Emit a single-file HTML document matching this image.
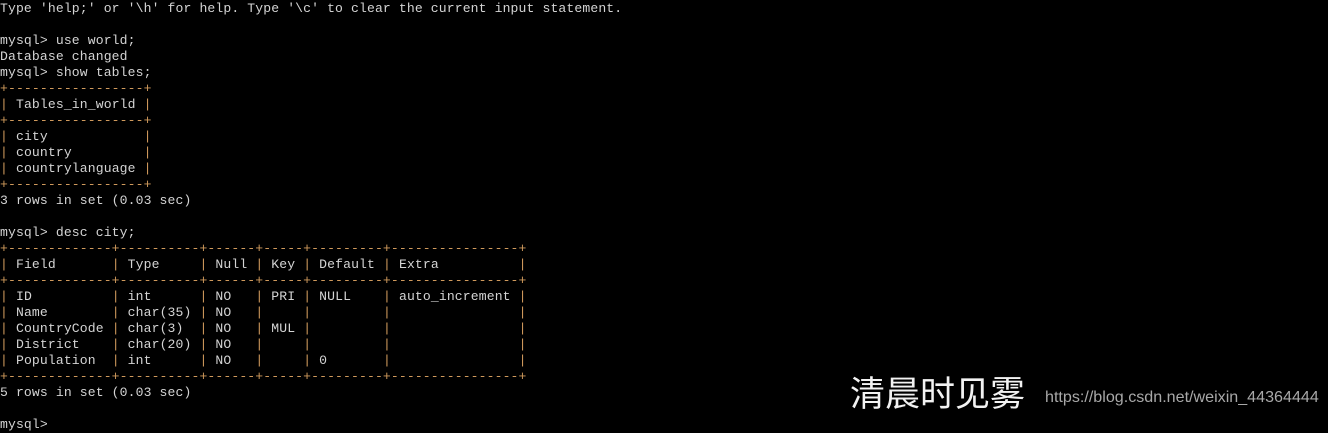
<!DOCTYPE html>
<html><head><meta charset="utf-8"><style>
html,body{margin:0;padding:0;background:#000;width:1328px;height:419px;overflow:hidden}
pre{margin:0;position:absolute;left:0;top:1px;font-family:"Liberation Mono","Noto Sans CJK SC",monospace;font-size:13.1px;line-height:16px;color:#d4d4d4;letter-spacing:0.12px}
.b{color:#d09a5c}
.wm{position:absolute;left:850px;top:370px;font-family:"Noto Sans CJK SC",sans-serif;font-size:35px;color:#f2f2f2;line-height:44px}
.url{position:absolute;left:1045px;top:388px;font-family:"Liberation Sans",sans-serif;font-size:16.1px;color:#a8a8a8}
</style></head><body>
<pre>Type 'help;' or '\h' for help. Type '\c' to clear the current input statement.

mysql&gt; use world;
Database changed
mysql&gt; show tables;
<span class="b">+-----------------+</span>
<span class="b">|</span> Tables_in_world <span class="b">|</span>
<span class="b">+-----------------+</span>
<span class="b">|</span> city            <span class="b">|</span>
<span class="b">|</span> country         <span class="b">|</span>
<span class="b">|</span> countrylanguage <span class="b">|</span>
<span class="b">+-----------------+</span>
3 rows in set (0.03 sec)

mysql&gt; desc city;
<span class="b">+-------------+----------+------+-----+---------+----------------+</span>
<span class="b">|</span> Field       <span class="b">|</span> Type     <span class="b">|</span> Null <span class="b">|</span> Key <span class="b">|</span> Default <span class="b">|</span> Extra          <span class="b">|</span>
<span class="b">+-------------+----------+------+-----+---------+----------------+</span>
<span class="b">|</span> ID          <span class="b">|</span> int      <span class="b">|</span> NO   <span class="b">|</span> PRI <span class="b">|</span> NULL    <span class="b">|</span> auto_increment <span class="b">|</span>
<span class="b">|</span> Name        <span class="b">|</span> char(35) <span class="b">|</span> NO   <span class="b">|</span>     <span class="b">|</span>         <span class="b">|</span>                <span class="b">|</span>
<span class="b">|</span> CountryCode <span class="b">|</span> char(3)  <span class="b">|</span> NO   <span class="b">|</span> MUL <span class="b">|</span>         <span class="b">|</span>                <span class="b">|</span>
<span class="b">|</span> District    <span class="b">|</span> char(20) <span class="b">|</span> NO   <span class="b">|</span>     <span class="b">|</span>         <span class="b">|</span>                <span class="b">|</span>
<span class="b">|</span> Population  <span class="b">|</span> int      <span class="b">|</span> NO   <span class="b">|</span>     <span class="b">|</span> 0       <span class="b">|</span>                <span class="b">|</span>
<span class="b">+-------------+----------+------+-----+---------+----------------+</span>
5 rows in set (0.03 sec)

mysql&gt;
</pre>
<div class="wm">清晨时见雾</div>
<div class="url">https://blog.csdn.net/weixin_44364444</div>
</body></html>
